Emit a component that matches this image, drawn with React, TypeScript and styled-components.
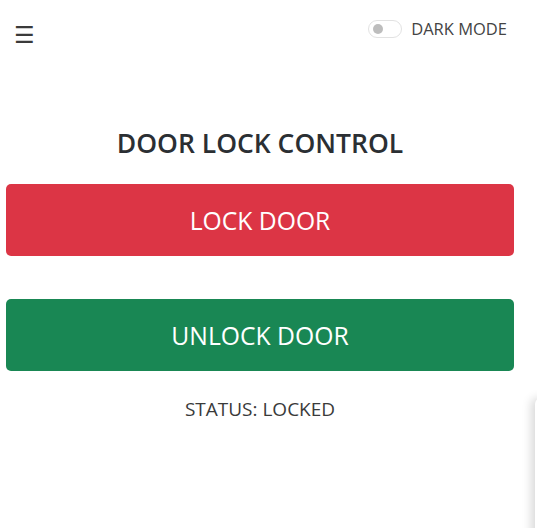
import React, { useState } from "react";
import styled, { createGlobalStyle } from "styled-components";

const Global = createGlobalStyle`
  html, body { margin: 0; padding: 0; background: #fff; }
  body { font-family: "Open Sans", "Noto Sans", sans-serif; color: #212529; overflow: hidden; }
  * { box-sizing: border-box; }
`;

const Page = styled.div`
  position: relative;
  width: 537px;
  height: 528px;
  overflow: hidden;
`;

const TopBar = styled.div`
  display: flex;
  justify-content: space-between;
  align-items: flex-start;
  padding: 17px 30px 0 14px;
  height: 60px;
`;

const Burger = styled.button`
  border: none;
  background: none;
  padding: 0;
  margin-top: 6px;
  font-size: 23px;
  line-height: 24px;
  color: #3a3a3a;
  font-family: "DejaVu Sans", sans-serif;
  cursor: pointer;
`;

const ToggleWrap = styled.label`
  display: flex;
  align-items: center;
  gap: 9px;
  font-size: 16.5px;
  color: #444;
  cursor: pointer;
`;

const Track = styled.span`
  position: relative;
  width: 34px;
  height: 18px;
  border-radius: 9px;
  border: 1px solid #e2e2e2;
  background: #fff;
`;

const Knob = styled.span`
  position: absolute;
  top: 3px;
  left: 4px;
  width: 10px;
  height: 10px;
  border-radius: 50%;
  background: #bdbdbd;
`;

const Main = styled.main`
  display: flex;
  flex-direction: column;
  align-items: stretch;
  padding: 0 23px 0 6px;
`;

const Title = styled.h2`
  margin: 65px 0 23px;
  text-align: center;
  font-size: 26.5px;
  font-weight: 600;
  line-height: 36px;
  color: #2b2f33;
`;

const ActionButton = styled.button<{ $bg: string }>`
  height: 72px;
  border: none;
  border-radius: 5px;
  background: ${(p) => p.$bg};
  color: #fff;
  font-family: "Open Sans", sans-serif;
  font-size: 24.7px;
  cursor: pointer;
  & + & { margin-top: 43px; }
`;

const Status = styled.p`
  margin: 25px 0 0;
  text-align: center;
  font-size: 19px;
  color: #3a3a3a;
`;

const Edge = styled.div`
  position: absolute;
  left: 535px;
  top: 398px;
  width: 200px;
  height: 200px;
  background: #fff;
  box-shadow: -4px 0 10px rgba(0, 0, 0, 0.15);
  border-radius: 6px 0 0 0;
`;

export default function App() {
  const [locked, setLocked] = useState(true);
  return (
    <Page>
      <Global />
      <TopBar>
        <Burger>☰</Burger>
        <ToggleWrap>
          <Track>
            <Knob />
          </Track>
          DARK MODE
        </ToggleWrap>
      </TopBar>
      <Main>
        <Title>DOOR LOCK CONTROL</Title>
        <ActionButton $bg="#dc3545" onClick={() => setLocked(true)}>LOCK DOOR</ActionButton>
        <ActionButton $bg="#198754" onClick={() => setLocked(false)}>UNLOCK DOOR</ActionButton>
        <Status>STATUS: {locked ? "LOCKED" : "UNLOCKED"}</Status>
      </Main>
      <Edge />
    </Page>
  );
}
